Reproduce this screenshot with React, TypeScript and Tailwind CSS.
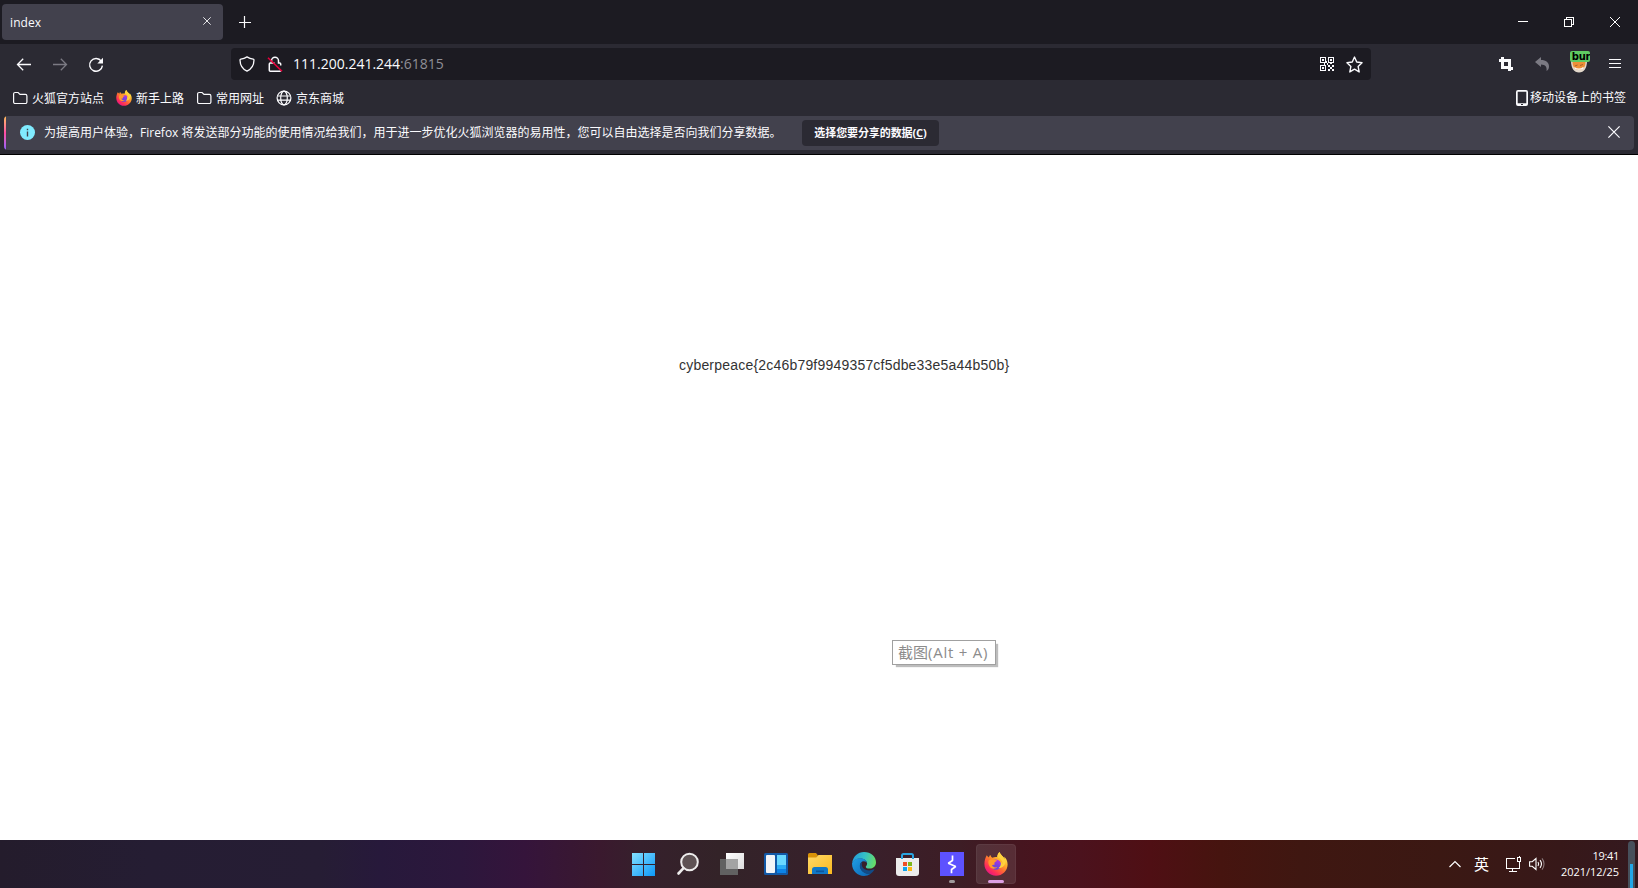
import type { ReactNode } from "react";

const uiFont = "font-['Open_Sans','Noto_Sans_CJK_SC',sans-serif]";

function FirefoxLogo({ id, className }: { id: string; className: string }) {
  return (
    <svg viewBox="0 0 24 24" className={className} aria-hidden={true}>
      <defs>
        <linearGradient id={`${id}-body`} x1="0.85" y1="0.1" x2="0.2" y2="0.95">
          <stop offset="0" stopColor="#fff44f" />
          <stop offset="0.3" stopColor="#ffb02a" />
          <stop offset="0.55" stopColor="#ff6a33" />
          <stop offset="0.8" stopColor="#ff2d5a" />
          <stop offset="1" stopColor="#e31587" />
        </linearGradient>
        <linearGradient id={`${id}-orb`} x1="0.7" y1="0" x2="0.3" y2="1">
          <stop offset="0" stopColor="#b833e1" />
          <stop offset="0.5" stopColor="#7a3fe0" />
          <stop offset="1" stopColor="#5b4bd5" />
        </linearGradient>
      </defs>
      <path fill={`url(#${id}-body)`} d="M15.500 0c-1.600 1.500-2.200 3.500-2.200 5.200-1.800-.2-3.500 0-5 .5C7.500 5.200 6.800 4 6.300 2.900 5.500 3.500 5 4.600 5 5.500 4 5 3.200 4.200 2.800 3.300 1.500 5.100.4 8.600.4 12c0 6.600 5.200 11.700 11.600 11.700S23.600 18.600 23.600 12.400c0-3.200-1.500-6.400-3.600-7.900.4.900.6 1.700.6 2.500C19.600 4.300 16.600 3.200 15.500 0z" />
      <circle cx="12" cy="12.600" r="5.200" fill={`url(#${id}-orb)`} />
      <path fill="#ff9a2b" d="M4.600 8.500c1.600-1.500 4-1.600 5.800-.5 1 .1 2.300.1 2.600.6-.1.900-2 1.400-2.500 2-.2.900.2 1.700-.2 2.300-.8-.3-1.700-.1-2.300.4.9 1.900 2.900 2.700 5.300 1.700-1.400 2-4.800 2.400-7 .2C4.500 13.400 4 10.700 4.600 8.500z" />
      <path fill="#ffd23e" d="M15.500 0c-1.600 1.500-2.200 3.500-2.200 5.200 3.600.9 5.500 3.900 5.200 7.600-.2-1.400-.8-2.500-1.700-3.300.5 3-.4 5.400-2.500 6.800 3.700-.1 6.900-2.900 7.200-6.300.2-4.500-4.900-6-6-10z" />
    </svg>
  );
}

function FolderIcon() {
  return (
    <svg viewBox="0 0 16 14" className="h-3.5 w-4" fill="none" stroke="#fbfbfe" strokeWidth="1.2">
      <path d="M1.600 3a1.500 1.500 0 0 1 1.500-1.500h3L8 3.400h5.400A1.500 1.500 0 0 1 14.900 4.900v6.100a1.500 1.500 0 0 1-1.500 1.500H3.100A1.500 1.500 0 0 1 1.600 11z" />
    </svg>
  );
}

function GlobeIcon() {
  return (
    <svg viewBox="0 0 16 16" className="size-4" fill="none" stroke="#fbfbfe" strokeWidth="1.2">
      <circle cx="8" cy="8" r="6.900" />
      <ellipse cx="8" cy="8" rx="3.300" ry="6.900" />
      <path d="M1.500 6h13M1.500 10.200h13" />
    </svg>
  );
}

function QrIcon() {
  return (
    <svg viewBox="0 0 14 14" className="size-3.5" fill="#fbfbfe" shapeRendering="crispEdges">
      <path fillRule="evenodd" d="M0 0h6v6H0zM1 1v4h4V1zM8 0h6v6H8zM9 1v4h4V1zM0 8h6v6H0zM1 9v4h4V9z" />
      <path d="M2 2h2v2H2zM10 2h2v2h-2zM2 10h2v2H2zM8 8h2v2H8zM12 8h2v2h-2zM10 10h2v2h-2zM8 12h2v2H8zM12 12h2v2h-2zM6 4h1v2H6zM7 6h1v2H7zM4 6h1v2H4zM10 6h2v1h-2z" />
    </svg>
  );
}

function TabStrip() {
  return (
    <div className="flex h-11 items-start bg-[#1c1b22] pt-1 pl-0.5 text-[#fbfbfe]">
      <div className="flex h-9 w-[221px] items-center justify-between rounded bg-[#42414d] pr-3 pl-2">
        <span className="pt-0.5 text-[12px] tracking-[0.1px]">index</span>
        <svg viewBox="0 0 8 8" className="mb-0.5 size-2" stroke="#e4e4e8" strokeWidth="1">
          <path d="M.3.3l7.400 7.400M7.700.3L.3 7.700" />
        </svg>
      </div>
      <svg viewBox="0 0 12 12" className="mt-3 ml-4 size-3" stroke="#fbfbfe" strokeWidth="1.200">
        <path d="M5.500 0v12M0 6.500h12" />
      </svg>
      <div className="mt-[13px] mr-[18px] ml-auto flex gap-9">
        <svg viewBox="0 0 10 10" className="size-2.5" fill="#fff" shapeRendering="crispEdges">
          <path d="M0 4h10v1H0z" />
        </svg>
        <svg viewBox="0 0 10 10" className="size-2.5" fill="none" stroke="#fff" shapeRendering="crispEdges">
          <path d="M.5 2.500h7v7h-7zM2.500 2.500v-2h7v7h-2" />
        </svg>
        <svg viewBox="0 0 10 10" className="size-2.5" stroke="#fff" strokeWidth="1">
          <path d="M0 0l10 10M10 0L0 10" />
        </svg>
      </div>
    </div>
  );
}

function NavBar() {
  return (
    <div className="flex h-10 items-center pl-4">
      <svg viewBox="0 0 16 16" className="mt-0.5 size-4" fill="none" stroke="#fbfbfe" strokeWidth="1.300">
        <path d="M15 7.500H1.500M7.200 1.800L1.500 7.500l5.700 5.700" />
      </svg>
      <svg viewBox="0 0 16 16" className="mt-0.5 ml-5 size-4" fill="none" stroke="#7b7a83" strokeWidth="1.300">
        <path d="M1 7.500h13.500M8.800 1.800L14.500 7.500l-5.700 5.700" />
      </svg>
      <svg viewBox="0 0 16 16" className="mt-0.5 ml-5 size-4" fill="none" stroke="#fbfbfe" strokeWidth="1.400">
        <path d="M13.300 4.200A6.400 6.400 0 1 0 14.400 8.600" />
        <path d="M15 .8v5.700H9.300z" fill="#fbfbfe" stroke="none" />
      </svg>
      <div className="ml-[127px] flex h-8 w-[1140px] items-center rounded bg-[#1c1b22] pr-2 pl-2">
        <svg viewBox="0 0 16 16" className="size-4" fill="none" stroke="#fbfbfe" strokeWidth="1.300" strokeLinejoin="round">
          <path d="M8 .9c2 1.300 4.100 2 6.200 2.300.5.100.8.400.8.900-.1 5-2.700 9.200-7 11.100C3.700 13.300 1.100 9.100 1 4.100c0-.5.300-.8.800-.9C3.900 2.900 6 2.200 8 .9z" />
        </svg>
        <svg viewBox="0 0 16 16" className="ml-3 size-4" fill="none" stroke="#fbfbfe" strokeWidth="1.500">
          <path d="M4.500 6V4.700a3.500 3.500 0 0 1 7 0V7h1.200a1 1 0 0 1 1 1v1.500M7.500 7H3.300a1 1 0 0 0-1 1v6.200a1 1 0 0 0 1 1h9.400a1 1 0 0 0 .9-.6" />
          <path d="M1 1.700l14 13.600" stroke="#e8003c" strokeWidth="1.600" />
        </svg>
        <span className="ml-2.5 text-[14px] leading-5 text-[#fbfbfe]">
          111.200.241.244<span className="text-[#8f8f96]">:61815</span>
        </span>
        <div className="ml-auto flex items-center gap-3">
          <QrIcon />
          <svg viewBox="0 0 16 16" className="size-[17px]" fill="none" stroke="#fbfbfe" strokeWidth="1.300" strokeLinejoin="round">
            <path d="M8 1l2.100 4.700 5 .6-3.700 3.500 1 5.200L8 12.400 3.600 15l1-5.200L.9 6.300l5-.6z" />
          </svg>
        </div>
      </div>
      <div className="ml-32 flex items-center">
        <svg viewBox="0 0 14 14" className="size-3.5" fill="#fbfbfe">
          <path fillRule="evenodd" d="M2 0h3v2h7v8h2v3h-2v1H9v-2H2V5H0V2h2zM5 5v4h4V5z" />
        </svg>
        <svg viewBox="0 0 14 14" className="ml-[22px] size-3.5" fill="#7b7a83">
          <path d="M0 5L6 0v3c5 0 8 2.500 8 6.500 0 2-.9 3.500-2.500 4.500.7-3.700-1-6.500-5.500-6.500V10z" />
        </svg>
        <div className="relative ml-[22px] h-5 w-4">
          <svg viewBox="0 0 16 16" className="mt-[3px] size-4">
            <path fill="#e4d9cc" d="M0 4h16c0 7-3 11.500-8 11.500S0 11 0 4z" />
            <path fill="#ee8f36" d="M1.500 5h13c0 5-2.500 8-6.500 8s-6.500-3-6.500-8z" />
            <path stroke="#a8632c" strokeWidth="1" fill="none" d="M4 9l2.500-1M9 8.500l3-1" />
            <path stroke="#fff" strokeWidth="1.200" fill="none" d="M3.500 10.500c1.500 2 6.500 2.500 9 0" />
          </svg>
          <span className="absolute -top-[3px] -left-px flex h-[11px] w-5 items-center justify-center overflow-hidden rounded-[2px] bg-[#5fcb62] pl-0.5 font-['DejaVu_Sans',sans-serif] text-[10px] leading-none font-bold tracking-[-0.2px] text-black">
            bur
          </span>
        </div>
        <svg viewBox="0 0 12 12" className="ml-[22px] h-3 w-3" fill="#fbfbfe" shapeRendering="crispEdges">
          <path d="M0 1h12v1H0zM0 5h12v1H0zM0 9h12v1H0z" />
        </svg>
      </div>
    </div>
  );
}

function Bookmark({ icon, label }: { icon: ReactNode; label: string }) {
  return (
    <div className="flex items-center gap-1">
      {icon}
      <span className="pt-0.5">{label}</span>
    </div>
  );
}

function BookmarksBar() {
  return (
    <div className="flex h-8 items-center justify-between pr-3 pl-3 text-[12px] leading-4 text-[#fbfbfe]">
      <div className="flex gap-3 pb-1">
        <Bookmark icon={<FolderIcon />} label="火狐官方站点" />
        <Bookmark icon={<FirefoxLogo id="ff-bookmark" className="size-4" />} label="新手上路" />
        <Bookmark icon={<FolderIcon />} label="常用网址" />
        <Bookmark icon={<GlobeIcon />} label="京东商城" />
      </div>
      <div className="flex items-center gap-0.5 pb-1">
        <svg viewBox="0 0 12 16" className="h-4 w-3" fill="#fbfbfe">
          <path fillRule="evenodd" d="M2 0h8a2 2 0 0 1 2 2v12a2 2 0 0 1-2 2H2a2 2 0 0 1-2-2V2a2 2 0 0 1 2-2zM1.700 1.800v11.400h8.600V1.800zM5 14h2v1H5z" />
        </svg>
        <span>移动设备上的书签</span>
      </div>
    </div>
  );
}

function NoticeBar() {
  return (
    <div className="mx-1 flex h-[34px] items-center overflow-hidden rounded bg-[#42414d] text-[12px] text-[#fbfbfe]">
      <div className="h-full w-0.5 bg-linear-to-b from-[#ffbd4f] via-[#ff4aa2] to-[#9059ff]" />
      <svg viewBox="0 0 16 16" className="ml-[13px] size-4">
        <circle cx="8.500" cy="7.500" r="7.500" fill="#80ebff" />
        <path fill="#42414d" d="M7.800 6.500h1.400v5H7.800zM7.800 3.700h1.400v1.500H7.800z" />
      </svg>
      <span className="ml-[9px] w-[737px] whitespace-nowrap">
        为提高用户体验，Firefox 将发送部分功能的使用情况给我们，用于进一步优化火狐浏览器的易用性，您可以自由选择是否向我们分享数据。
      </span>
      <button className="ml-[21px] h-[26px] w-[137px] shrink-0 rounded bg-[#2b2a33] pt-px text-[11px] font-bold tracking-[-0.1px] whitespace-nowrap">
        选择您要分享的数据(<span className="underline">C</span>)
      </button>
      <svg viewBox="0 0 12 12" className="mr-3.5 mb-0.5 ml-auto size-3" stroke="#fbfbfe" strokeWidth="1.200">
        <path d="M.4.4l11.200 11.200M11.600.4L.4 11.600" />
      </svg>
    </div>
  );
}

function StartIcon() {
  return (
    <svg viewBox="0 0 24 24" className="size-6">
      <defs>
        <linearGradient id="win" x1="0" y1="0" x2="1" y2="1">
          <stop offset="0" stopColor="#84e0ff" />
          <stop offset="1" stopColor="#0c98f8" />
        </linearGradient>
      </defs>
      <path fill="url(#win)" d="M0 1h11v11H0zM12 1h11v11H12zM0 13h11v11H0zM12 13h11v11H12z" />
    </svg>
  );
}

function SearchIcon() {
  return (
    <svg viewBox="0 0 24 24" className="size-6" fill="none" stroke="#eeecec" strokeLinecap="round">
      <circle cx="13.500" cy="10" r="8.300" fill="#5f5254" strokeWidth="2" />
      <path d="M7.500 16.200L2.500 21.500" strokeWidth="2.600" />
    </svg>
  );
}

function TaskViewIcon() {
  return (
    <svg viewBox="0 0 24 24" className="size-6">
      <defs>
        <linearGradient id="pane" x1="0" y1="0" x2="1" y2="1">
          <stop offset="0" stopColor="#fff" />
          <stop offset="1" stopColor="#dcdcdc" />
        </linearGradient>
      </defs>
      <path fill="#616161" d="M0 7h18v16H0z" />
      <path fill="url(#pane)" d="M6 1h18v16H6z" />
      <path fill="#a3a3a3" d="M6 7h12v10H6z" />
    </svg>
  );
}

function WidgetsIcon() {
  return (
    <svg viewBox="0 0 24 24" className="size-6">
      <rect y="1" width="24" height="22" rx="1.500" fill="#1259a7" />
      <rect x="2" y="3" width="9" height="18" rx="1" fill="#f2f4f7" />
      <path fill="#69d8ff" d="M13 3h9v10h-9z" />
      <path fill="#2aacf5" d="M13 13h9v4h-9z" />
      <path fill="#0c83e8" d="M13 17h9v4h-9z" />
    </svg>
  );
}

function ExplorerIcon() {
  return (
    <svg viewBox="0 0 24 24" className="size-6">
      <defs>
        <linearGradient id="folder" x1="0" y1="0" x2="1" y2="1">
          <stop offset="0" stopColor="#ffd968" />
          <stop offset="1" stopColor="#fbb91f" />
        </linearGradient>
      </defs>
      <path fill="#d99208" d="M0 2.500A1.500 1.500 0 0 1 1.500 1H8l2 2.500L8 6H0z" />
      <path fill="url(#folder)" d="M0 5.500h8L10.500 3H24v19H0z" />
      <path fill="#1178c7" d="M4 22v-4.500A2.500 2.500 0 0 1 6.500 15h11a2.500 2.500 0 0 1 2.500 2.500V22z" />
      <path fill="#0b559c" d="M8 18.500h8v1.700H8z" />
    </svg>
  );
}

function EdgeIcon() {
  return (
    <svg viewBox="0 0 24 24" className="size-6">
      <defs>
        <linearGradient id="edge-top" x1="0" y1="0.300" x2="1" y2="0.500">
          <stop offset="0" stopColor="#239cdc" />
          <stop offset="0.500" stopColor="#35c1c5" />
          <stop offset="1" stopColor="#68dd65" />
        </linearGradient>
        <linearGradient id="edge-low" x1="0" y1="0" x2="1" y2="1">
          <stop offset="0" stopColor="#209ee5" />
          <stop offset="1" stopColor="#0b65b4" />
        </linearGradient>
      </defs>
      <path fill="url(#edge-top)" d="M.2 10.700C1 4.500 6 0 12 0c7 0 12 4.800 12 10.300 0 4-2.900 6.300-6.200 6.300-2.700 0-4-.9-4-1.700 0-.6 1.300-1.300 1.300-3.300C15.100 8.700 12 6.500 8.400 6.500c-3.600 0-6.500 1.700-8.200 4.200z" />
      <path fill="url(#edge-low)" d="M.1 11c1.200-3 4.500-4.800 8.100-4.800 3.200 0 6.700 1.900 6.900 5-.4-.9-1.700-1.900-3.300-1.900C9.500 9.300 8 11.300 8 13.600c0 4.600 4.500 8.500 10.300 8.500-1.700 1.200-3.900 1.900-6.300 1.900C5.300 24-.5 18.300.1 11z" />
      <path fill="#124b86" d="M10.300 9.700c-1.500.7-2.500 2.500-2.500 4.300 0 4.600 5 8.500 10.600 8.100 1.700-1.200 3-2.600 4-4.300.2-.5-.2-.8-.6-.5-5.500 2.700-11.300.2-12-4-.2-1.400.1-2.600.5-3.600z" />
    </svg>
  );
}

function StoreIcon() {
  return (
    <svg viewBox="0 0 24 24" className="size-6">
      <path fill="none" stroke="#29a5e1" strokeWidth="2" d="M6 7V3.500A1.500 1.500 0 0 1 7.500 2h8A1.500 1.500 0 0 1 17 3.500V7" />
      <path fill="#ececec" d="M0 6h23v15a3 3 0 0 1-3 3H3a3 3 0 0 1-3-3z" />
      <path fill="#29a5e1" d="M5 6h2v1H5zM16 6h2v1h-2z" />
      <path fill="#ef4e24" d="M7 10h4v4H7z" />
      <path fill="#7db71a" d="M12 10h4v4h-4z" />
      <path fill="#0da2ec" d="M7 15h4v4H7z" />
      <path fill="#fdb813" d="M12 15h4v4h-4z" />
    </svg>
  );
}

function BurpIcon() {
  return (
    <svg viewBox="0 0 24 24" className="size-6">
      <path fill="#5d52ff" d="M0 0h24v24H0z" />
      <path fill="none" stroke="#fff" strokeWidth="1.700" strokeLinejoin="bevel" d="M12.500 3.500v5L8.300 11.300l7.400 3.200-4.200 3v3.800" />
    </svg>
  );
}

function TaskbarItem({ children }: { children: ReactNode }) {
  return <div className="flex size-10 items-center justify-center">{children}</div>;
}

function Taskbar() {
  return (
    <footer className="flex h-12 justify-between bg-[linear-gradient(90deg,#241c2c_0,#251d33_150px,#261d34_320px,#27193b_380px,#2c173c_460px,#35143b_525px,#3a192e_600px,#36202c_640px,#332328_720px,#38202c_850px,#3d1d25_960px,#46151f_1020px,#4b121d_1080px,#4f0f14_1150px,#46140f_1220px,#3f1711_1300px,#3b1813_1440px,#371819_1560px,#34191f_1638px)]">
      <div className="w-[624px]" />
      <div className="flex gap-1 pt-1">
        <TaskbarItem><StartIcon /></TaskbarItem>
        <TaskbarItem><SearchIcon /></TaskbarItem>
        <TaskbarItem><TaskViewIcon /></TaskbarItem>
        <TaskbarItem><WidgetsIcon /></TaskbarItem>
        <TaskbarItem><ExplorerIcon /></TaskbarItem>
        <TaskbarItem><EdgeIcon /></TaskbarItem>
        <TaskbarItem><StoreIcon /></TaskbarItem>
        <div className="flex size-10 flex-col items-center pt-2">
          <BurpIcon />
          <div className="mt-1 h-[3px] w-1.5 rounded-full bg-[#a09a9b]" />
        </div>
        <div className="flex size-10 flex-col items-center rounded border border-white/5 bg-white/10 pt-[7px]">
          <FirefoxLogo id="ff-task" className="size-6" />
          <div className="mt-1 h-[3px] w-4 shrink-0 rounded-full bg-[#dd9fe3]" />
        </div>
      </div>
      <div className="flex w-[622px] items-start justify-end text-white">
        <svg viewBox="0 0 12 8" className="mt-5 h-2 w-3" fill="none" stroke="#fff" strokeWidth="1.200">
          <path d="M.5 7L6 1.500 11.500 7" />
        </svg>
        <span className="mt-3 ml-[13px] text-[15px] leading-6">英</span>
        <svg viewBox="0 0 17 17" className="mt-4 ml-4 size-[17px]" fill="none" stroke="#fff" shapeRendering="crispEdges">
          <path d="M10 2.500H1.500v9.500h13V9M7.500 12v3M4 15.500h8M12.500 1.500h3v4h-3zM14 5.500v5M14.500 0v1.500" />
        </svg>
        <svg viewBox="0 0 17 14" className="mt-[17px] ml-[7px] h-3.5 w-[17px]" fill="none" stroke="#fff" strokeWidth="1.100">
          <path d="M.6 4.700h2.600L7 1.500v11L3.200 9.300H.6z" />
          <path d="M9 5c.8 1.200.8 2.800 0 4M11 3.200c1.700 2.200 1.700 5.400 0 7.600" />
          <path stroke="#8b7a7b" d="M13 1.300c2.700 3.300 2.700 8.100 0 11.400" />
        </svg>
        <div className="mt-2 ml-3.5 w-[59px] text-right text-[11px] leading-4 whitespace-nowrap">
          <p className="tracking-[-0.3px]">19:41</p>
          <p className="tracking-[-0.03px]">2021/12/25</p>
        </div>
        <div className="mt-px mr-[3px] ml-[9px] flex h-[47px] w-[7px] items-end justify-center rounded-t-full bg-[#47505b]">
          <div className="h-6 w-[3px] bg-[#22a7e8]" />
        </div>
      </div>
    </footer>
  );
}

export default function App() {
  return (
    <div className={`flex h-[888px] w-[1638px] flex-col overflow-hidden bg-white ${uiFont}`}>
      <header className="h-[155px] border-b border-black bg-[#2b2a33]">
        <TabStrip />
        <NavBar />
        <BookmarksBar />
        <NoticeBar />
      </header>
      <main className="relative flex-1 pt-[200px] pl-[679px]">
        <p className="font-['Liberation_Sans',sans-serif] text-[14px] leading-5 tracking-[0.2px] whitespace-nowrap text-[#333]">
          cyberpeace&#123;2c46b79f9949357cf5dbe33e5a44b50b&#125;
        </p>
        <div className="absolute top-[485px] left-[892px] flex h-[25px] w-[104px] items-center border border-[#a0a0a0] bg-white pl-[5px] text-[15px] whitespace-nowrap text-[#8c8c8c] shadow-[3px_3px_1px_-1px_#bdbdbd]">
          截图<span className="tracking-[0.75px]">(Alt + A)</span>
        </div>
      </main>
      <Taskbar />
    </div>
  );
}
